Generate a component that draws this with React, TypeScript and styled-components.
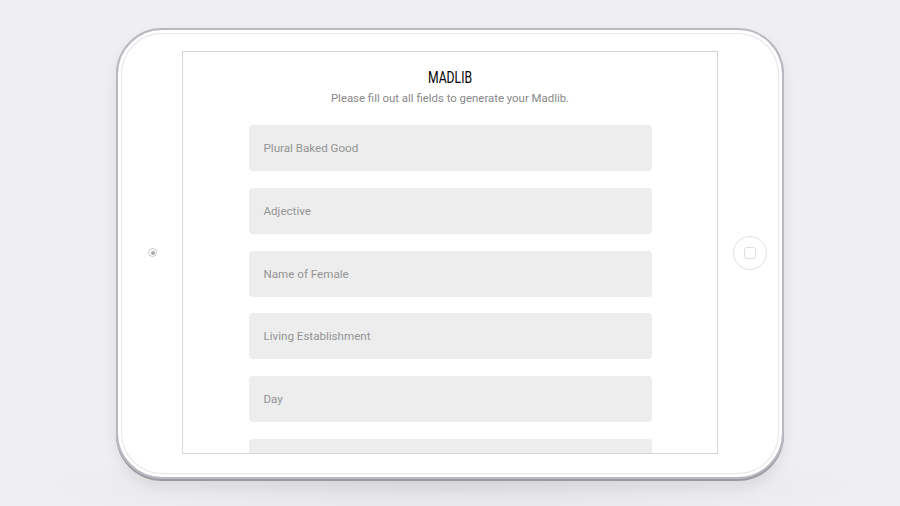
import React from "react";
import styled, { createGlobalStyle } from "styled-components";

const Global = createGlobalStyle`
  html, body { margin: 0; padding: 0; }
  body {
    background: #efeff1;
    width: 900px;
    height: 506px;
    overflow: hidden;
    font-family: Roboto, "Liberation Sans", sans-serif;
  }
`;

const Stage = styled.div`
  width: 900px;
  height: 506px;
  display: flex;
  justify-content: center;
  align-items: flex-start;
  padding-top: 28px;
  box-sizing: border-box;
  background: radial-gradient(ellipse 420px 40px at 450px 486px, #e3e3e5 0%, #efeff1 100%);
`;

const Tablet = styled.div`
  width: 668px;
  height: 451px;
  box-sizing: border-box;
  border: 2px solid #b9b9c1;
  border-radius: 46px;
  background: #ffffff;
  box-shadow: inset 0 0 0 3px #ffffff, inset 0 0 0 4px #e6e6e8, 0 2px 0 #9a9aa0,
    0 8px 14px rgba(0, 0, 0, 0.08);
  display: flex;
  align-items: stretch;
  padding: 21px 0 23px 0;
`;

const Bezel = styled.div<{ $pad?: number }>`
  width: 64px;
  flex: none;
  display: flex;
  align-items: center;
  justify-content: center;
  padding-left: ${(p) => p.$pad ?? 0}px;
  box-sizing: border-box;
`;

const Camera = styled.div`
  width: 9px;
  height: 9px;
  border-radius: 50%;
  border: 1px solid #c9c9cc;
  box-sizing: border-box;
  display: flex;
  align-items: center;
  justify-content: center;
  &::after {
    content: "";
    width: 4px;
    height: 4px;
    border-radius: 50%;
    background: #a9a9ad;
  }
`;

const HomeButton = styled.div`
  width: 34px;
  height: 34px;
  border-radius: 50%;
  border: 1.5px solid #e2e2e4;
  box-sizing: border-box;
  display: flex;
  align-items: center;
  justify-content: center;
  &::after {
    content: "";
    width: 10px;
    height: 10px;
    border-radius: 3px;
    border: 1.5px solid #dedee0;
  }
`;

const Screen = styled.div`
  width: 536px;
  flex: none;
  box-sizing: border-box;
  border: 1px solid #d6d6d8;
  background: #ffffff;
  overflow: hidden;
  display: flex;
  flex-direction: column;
  align-items: center;
  padding-top: 16px;
`;

const Title = styled.h1`
  margin: 0;
  font-family: Roboto, "DejaVu Sans", sans-serif;
  font-weight: 400;
  font-size: 16px;
  line-height: 19px;
  color: #000;
  transform: scaleX(0.76);
`;

const Subtitle = styled.p`
  margin: 3px 0 0 0;
  font-size: 11.4px;
  line-height: 16px;
  color: #888888;
`;

const Form = styled.div`
  margin-top: 19px;
  display: flex;
  flex-direction: column;
  gap: 16.8px;
  width: 403px;
`;

const Field = styled.div`
  height: 46px;
  flex: none;
  border-radius: 4px;
  background: #ededed;
  display: flex;
  align-items: center;
  padding-left: 15px;
  font-size: 11.6px;
  color: #949494;
`;

const fields = [
  "Plural Baked Good",
  "Adjective",
  "Name of Female",
  "Living Establishment",
  "Day",
  "",
];

export default function App() {
  return (
    <>
      <Global />
      <Stage>
        <Tablet>
          <Bezel $pad={5}>
            <Camera />
          </Bezel>
          <Screen>
            <Title>MADLIB</Title>
            <Subtitle>Please fill out all fields to generate your Madlib.</Subtitle>
            <Form>
              {fields.map((f, i) => (
                <Field key={i}>{f}</Field>
              ))}
            </Form>
          </Screen>
          <Bezel>
            <HomeButton />
          </Bezel>
        </Tablet>
      </Stage>
    </>
  );
}
